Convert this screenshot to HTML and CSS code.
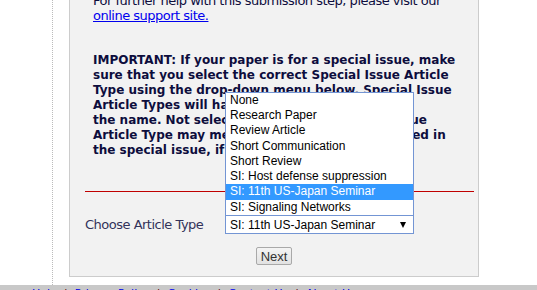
FILE: index.html
```html
<!DOCTYPE html>
<html lang="en">
  <head>
    <meta charset="UTF-8" />
    <meta name="viewport" content="width=device-width, initial-scale=1.0" />
    <title>Choose Article Type</title>
    <link rel="stylesheet" href="styles.css">
  </head>

  <body>
    <main class="page">
      <div class="panel">
        <p class="help">
          For further help with this submission step, please visit our<br />
          <a href="#">online support site. </a>
        </p>

        <p class="notice">
          IMPORTANT: If your paper is for a special issue, make<br />
          sure that you select the correct Special Issue Article<br />
          Type using the drop-down menu below. Special Issue<br />
          Article Types will have the prefix 'SI' in<br />
          the name. Not selecting the correct Special Issue<br />
          Article Type may mean your paper is not included in<br />
          the special issue, if accepted.
        </p>

        <hr class="rule" />

        <div class="field-row">
          <label class="field-label">Choose Article Type</label>
          <div class="select">
            <span class="select-value">SI: 11th US-Japan Seminar</span>
            <span class="select-arrow"></span>
            <!-- lista abierta del desplegable -->
            <ul class="options">
              <li>None</li>
              <li>Research Paper</li>
              <li>Review Article</li>
              <li>Short Communication</li>
              <li>Short Review</li>
              <li>SI: Host defense suppression</li>
              <li class="selected">SI: 11th US-Japan Seminar</li>
              <li>SI: Signaling Networks</li>
            </ul>
          </div>
        </div>

        <div class="actions">
          <button class="btn">Next</button>
        </div>
      </div>
    </main>

    <footer class="footer">
      <a href="#">Help</a><span class="sep">|</span><a href="#">Privacy Policy</a><span class="sep">|</span><a href="#">Cookies</a><span class="sep">|</span><a href="#">Contact Us</a><span class="sep">|</span><a href="#">About Us</a>
    </footer>
  </body>
</html>
```

FILE: styles.css
```css
body {
  margin: 0;
  font-family: "DejaVu Sans", Verdana, sans-serif;
  font-size: 13px;
  letter-spacing: -0.5px;
  color: #0d0d3d;
  background: #fff;
  overflow: hidden;
}

.page {
  margin: -19px 0 0 52px;
  padding: 0 0 8px 16px;
  border-left: 1px dotted #bbb;
}

.panel {
  width: 362px;
  padding: 11px 23px 11px 23px;
  background: #f2f2f2;
  border: 1px solid #ccc;
}

.help {
  margin: 0 0 30px;
  line-height: 15px;
  white-space: nowrap;
}

.help a {
  color: #0000ee;
}

.notice {
  margin: 0;
  font-size: 12px;
  font-weight: bold;
  letter-spacing: 0;
  line-height: 15px;
  white-space: nowrap;
}

.rule {
  height: 1px;
  margin: 33px -19px 0 -8px;
  border: 0;
  background-color: #c00000;
}

.field-row {
  display: flex;
  align-items: center;
  margin: 23px 0 0 -8px;
}

.field-label {
  width: 140px;
  color: #33335a;
}

.select {
  position: relative;
  display: flex;
  align-items: center;
  justify-content: space-between;
  width: 176px;
  height: 17px;
  padding: 0 7px 0 4px;
  background: #fff;
  border: 1px solid #7395d4;
  font-family: "Liberation Sans", Arial, sans-serif;
  font-size: 12px;
  letter-spacing: 0;
  color: #000;
}

.select-arrow {
  width: 0;
  height: 0;
  border-left: 3px solid transparent;
  border-right: 3px solid transparent;
  border-top: 6px solid #000;
}

.options {
  position: absolute;
  left: -1px;
  right: -1px;
  bottom: 100%;
  margin: 0;
  padding: 0;
  list-style: none;
  background: #fff;
  border: 1px solid #7395d4;
}

.options li {
  padding-left: 4px;
  line-height: 15.3px;
}

.options .selected {
  background: #3399ff;
  color: #fff;
}

.actions {
  margin-top: 13px;
  text-align: center;
}

.btn {
  height: 18px;
  padding: 0 4px;
  font-family: "Liberation Sans", Arial, sans-serif;
  font-size: 13px;
  color: #333;
  background: linear-gradient(#f4f4f4, #e2e2e2);
  border: 1px solid #a9a9a9;
  border-radius: 2px;
}

.footer {
  height: 20px;
  padding: 3px 0 0 32px;
  background: #c8c8c8;
  font-size: 11px;
  line-height: 12px;
  letter-spacing: 0;
}

.footer a {
  color: #0000ee;
  text-decoration: none;
}

.footer .sep {
  margin: 0 7px;
  color: #660000;
}
```
